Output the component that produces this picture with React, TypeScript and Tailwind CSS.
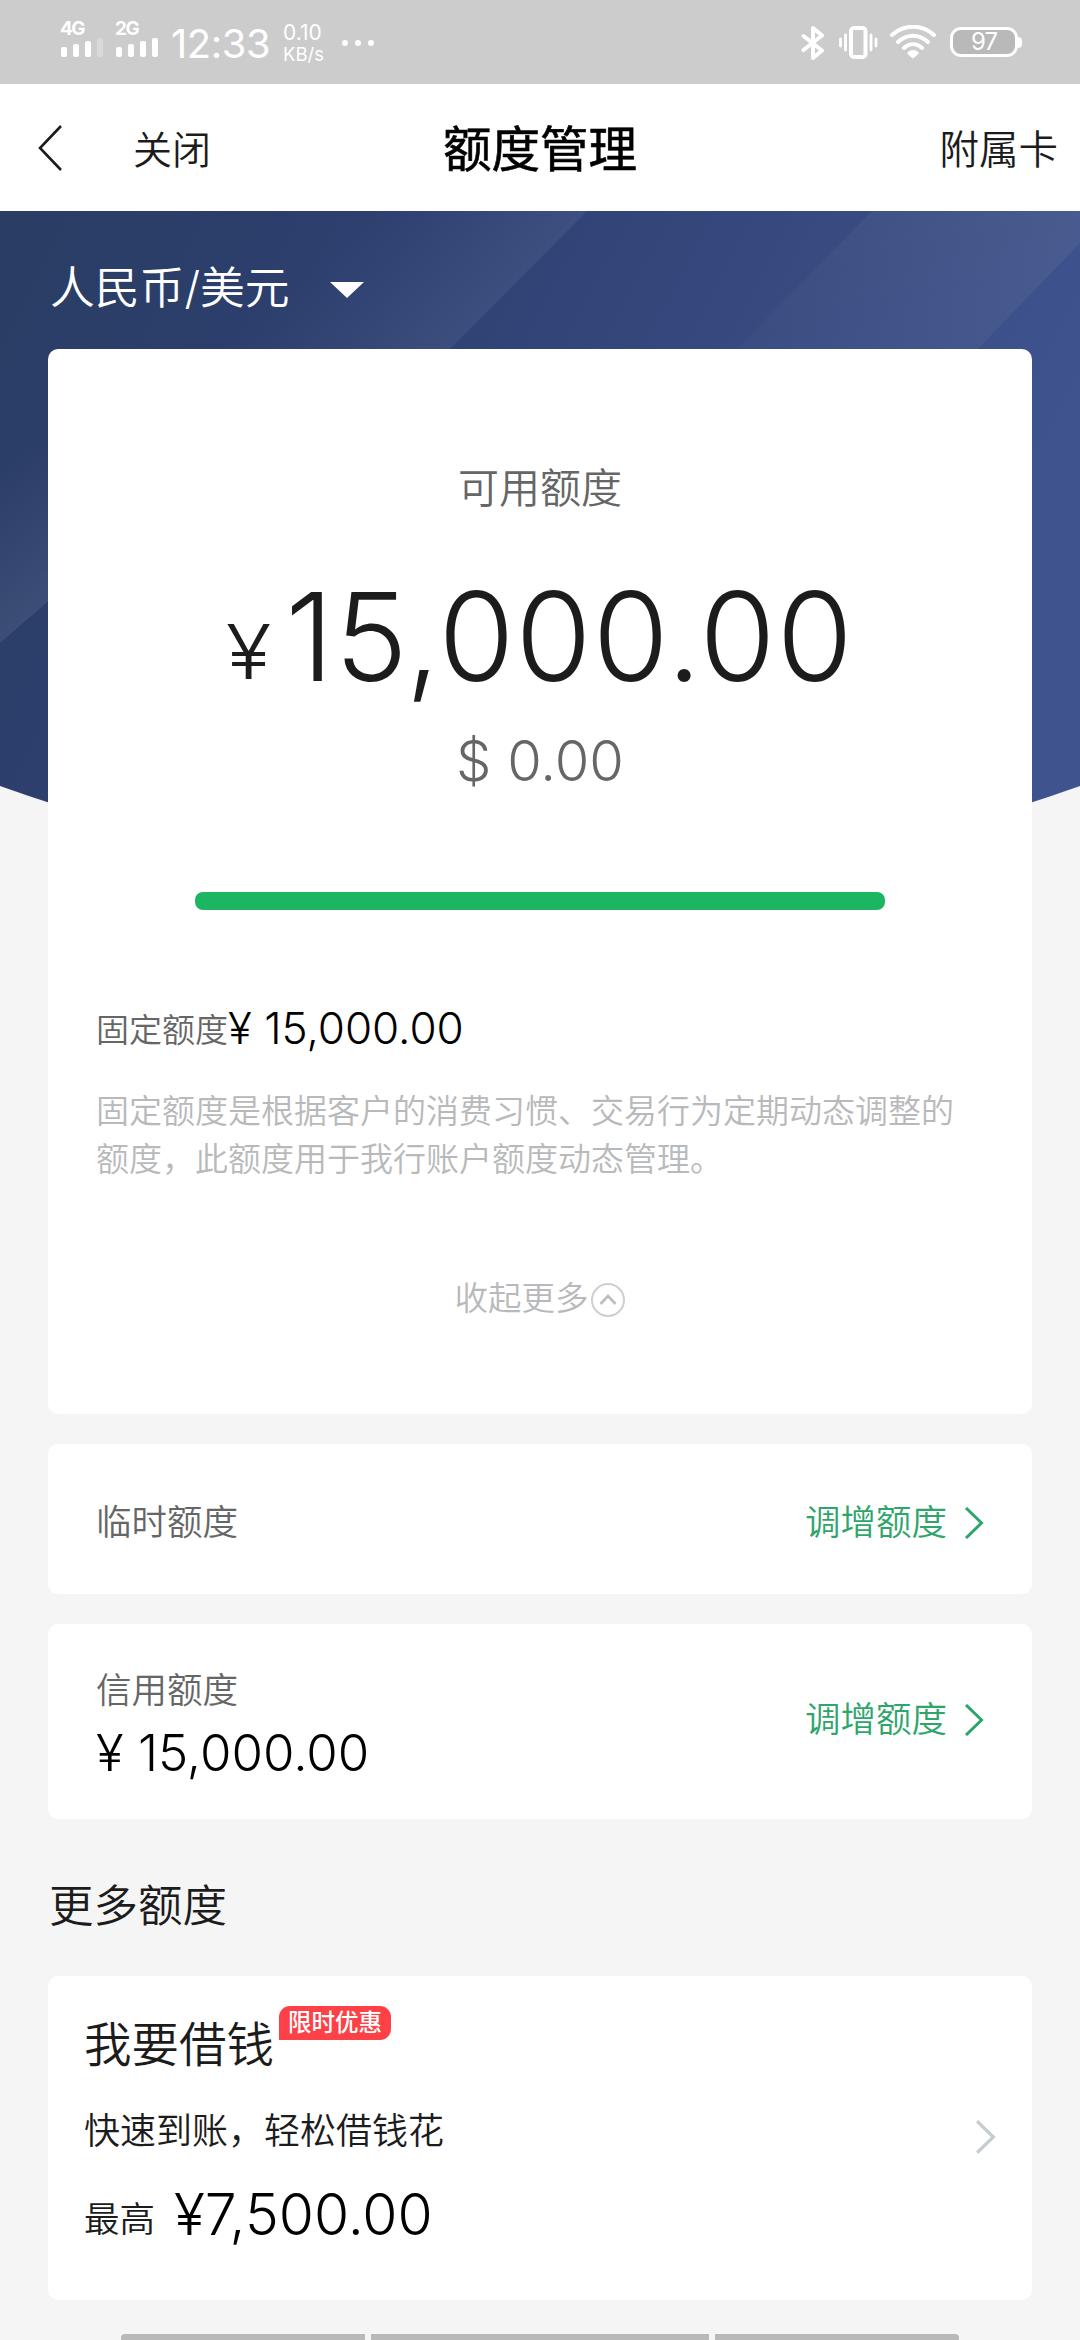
import { ReactNode } from "react";

function Chevron({ className, strokeWidth = 3 }: { className?: string; strokeWidth?: number }) {
  return (
    <svg viewBox="0 0 20 32" fill="none" stroke="currentColor" strokeWidth={strokeWidth} className={className}>
      <path d="M2 1 L17.5 16 L2 31" />
    </svg>
  );
}

function SignalBars({ label, level }: { label: string; level: number }) {
  const bars = [
    { x: 1, h: 10 },
    { x: 13, h: 13 },
    { x: 25, h: 16 },
    { x: 37, h: 19 },
  ];

  return (
    <div className="flex w-[43px] flex-col">
      <span className="text-[19px] leading-[16px] font-bold tracking-[-1.5px]">{label}</span>
      <svg viewBox="0 0 43 20" className="h-[20px] w-[43px]">
        {bars.map((bar, i) => (
          <rect
            key={bar.x}
            x={bar.x}
            y={20 - bar.h}
            width="6"
            height={bar.h}
            rx="2"
            fill="#fff"
            opacity={i < level ? 1 : 0.25}
          />
        ))}
      </svg>
    </div>
  );
}

function StatusBar() {
  return (
    <div className="flex h-[84px] justify-between bg-[#cccccc] pr-[58px] pl-[60px] font-normal text-white">
      <div className="flex">
        <div className="flex gap-[12px] pt-[21px]">
          <SignalBars label="4G" level={3} />
          <SignalBars label="2G" level={4} />
        </div>
        <span className="ml-[13px] w-[101px] pt-[20px] text-[40px] leading-[48px] tracking-[-0.5px]">12:33</span>
        <div className="ml-[11px] flex w-[45px] flex-col pt-[21px]">
          <span className="text-[21px] leading-[23px]">0.10</span>
          <span className="text-[18.500px] leading-[20px]">KB/s</span>
        </div>
        <div className="ml-[14px] flex gap-[7px] pt-[40px]">
          <i className="size-[6px] rounded-full bg-white" />
          <i className="size-[6px] rounded-full bg-white" />
          <i className="size-[6px] rounded-full bg-white" />
        </div>
      </div>
      <div className="flex">
        <svg viewBox="0 0 24 36" className="mt-[25px] h-[36px] w-[24px]" fill="none" stroke="#fff" strokeWidth="4" strokeLinejoin="round" strokeLinecap="round">
          <path d="M2.500 11 L21 25.500 L12 33 V3 L21 10.500 L2.500 25" />
        </svg>
        <svg viewBox="0 0 40 36" className="mt-[25px] ml-[14px] h-[36px] w-[40px]" fill="none" stroke="#fff" strokeLinecap="round">
          <rect x="12" y="3" width="14.5" height="29" rx="3" strokeWidth="4" />
          <path d="M6.500 10 V25 M32 10 V25 M1.500 14 V21 M37 14 V21" strokeWidth="2.8" />
        </svg>
        <svg viewBox="0 0 46 36" className="mt-[25px] ml-[11px] h-[36px] w-[46px]" fill="none" stroke="#fff" strokeWidth="4" strokeLinecap="round">
          <path d="M2 10 C14 -1 32 -1 44 10 M8 17 C17 8.500 29 8.500 38 17 M14 23 C19.500 18 26.500 18 32 23" />
          <path d="M18.500 28 C21 25.500 25 25.500 27.500 28 L23 32 Z" fill="#fff" strokeWidth="2.400" strokeLinejoin="round" />
        </svg>
        <div className="mt-[27px] ml-[14px] flex h-[30px] w-[68px] items-center justify-center rounded-[11px] border-3 border-white bg-[#b9b9b9] text-[24px] leading-[24px] tracking-[-1px]">
          97
        </div>
        <i className="mt-[37px] h-[11px] w-[4px] rounded-r-full bg-white" />
      </div>
    </div>
  );
}

function NavBar() {
  return (
    <header className="grid h-[127px] grid-cols-3 items-center bg-white text-[#1c1c1c]">
      <div className="flex items-center pl-[38px]">
        <svg viewBox="0 0 25 46" className="h-[46px] w-[25px]" fill="none" stroke="currentColor" strokeWidth="2.600">
          <path d="M23 1 L2 23 L23 45" />
        </svg>
        <span className="ml-[70px] pt-[5px] text-[39px]">关闭</span>
      </div>
      <h1 className="pt-[6px] text-center text-[48.500px] font-normal text-black [-webkit-text-stroke:0.6px_black]">额度管理</h1>
      <span className="pt-[6px] pr-[22px] text-right text-[39.500px]">附属卡</span>
    </header>
  );
}

// Curved blue backdrop behind the currency selector and the first card
function HeroBackdrop() {
  return (
    <svg viewBox="0 0 1080 640" className="absolute inset-x-0 top-0 h-[640px] w-full">
      <defs>
        <linearGradient id="hero" x1="0" y1="0" x2="1" y2="0.3">
          <stop offset="0" stopColor="#2a3d63" />
          <stop offset="0.35" stopColor="#2d4070" />
          <stop offset="1" stopColor="#3f538f" />
        </linearGradient>
        <linearGradient id="beamTop" gradientUnits="userSpaceOnUse" x1="520" y1="70" x2="410" y2="-40">
          <stop offset="0" stopColor="#fff" stopOpacity="0.06" />
          <stop offset="1" stopColor="#fff" stopOpacity="0" />
        </linearGradient>
        <linearGradient id="beamRight" gradientUnits="userSpaceOnUse" x1="1060" y1="0" x2="740" y2="150">
          <stop offset="0" stopColor="#dde8d0" stopOpacity="0.07" />
          <stop offset="1" stopColor="#dde8d0" stopOpacity="0.02" />
        </linearGradient>
        <linearGradient id="beamLeft" gradientUnits="userSpaceOnUse" x1="24" y1="411" x2="-60" y2="300">
          <stop offset="0" stopColor="#fff" stopOpacity="0.08" />
          <stop offset="1" stopColor="#fff" stopOpacity="0" />
        </linearGradient>
        <clipPath id="curve">
          <path d="M0 0 H1080 V575 Q540 768 0 575 Z" />
        </clipPath>
      </defs>
      <g clipPath="url(#curve)">
        <rect width="1080" height="640" fill="url(#hero)" />
        <path d="M200 0 H587 L440 148 H200 Z" fill="url(#beamTop)" />
        <path d="M872 0 H1080 V32 L968 148 H727 Z" fill="url(#beamRight)" />
        <path d="M0 150 H60 V380 L0 432 Z" fill="url(#beamLeft)" />
      </g>
    </svg>
  );
}

function Card({ className = "", children }: { className?: string; children: ReactNode }) {
  return <section className={`mx-[48px] rounded-[10px] bg-white ${className}`}>{children}</section>;
}

function IncreaseLink({ className = "" }: { className?: string }) {
  return (
    <a className={`flex items-center text-[35.500px] text-[#2fa56c] ${className}`}>
      调增额度
      <Chevron className="ml-[17px] h-[32px] w-[20px]" />
    </a>
  );
}

function AvailableLimit() {
  return (
    <Card className="flex h-[1065px] flex-col">
      <div className="flex flex-col items-center">
        <p className="mt-[109px] text-[41px] leading-[60px] text-[#666]">可用额度</p>
        <p className="mt-[44px] flex h-[150px] items-baseline pl-[4px] text-[#1c1c1c]">
          <span className="origin-right -translate-y-[2px] scale-x-110 text-[76px] leading-[150px]">¥</span>
          <span className="ml-[14px] text-[123px] leading-[150px] tracking-[1.200px]">15,000.00</span>
        </p>
        <p className="mt-[14px] text-[56px] leading-[70px] text-[#666]">$ 0.00</p>
        <div className="mt-[96px] h-[18px] w-[690px] rounded-[8px] bg-[#1cb562]" />
      </div>
      <div className="mt-[88px] px-[48px]">
        <p className="flex h-[60px] items-baseline leading-[60px]">
          <span className="-translate-y-[2px] text-[33px] text-[#666]">固定额度</span>
          <span className="text-[44px] text-black">¥ 15,000.00</span>
        </p>
        <p className="mt-[29px] w-[880px] text-[33px] leading-[48px] text-[#b8b9bb]">
          固定额度是根据客户的消费习惯、交易行为定期动态调整的额度，此额度用于我行账户额度动态管理。
        </p>
      </div>
      <button className="mt-[90px] flex items-center justify-center text-[33.500px] text-[#b8b9bb]">
        收起更多
        <svg viewBox="0 0 36 36" className="mt-[4px] ml-[1px] size-[36px]" fill="none">
          <circle cx="18" cy="18" r="16" stroke="#cfcfcf" strokeWidth="2" />
          <path d="M10.500 22 L18 14 L25.500 22" stroke="#bdbdbd" strokeWidth="2.600" />
        </svg>
      </button>
    </Card>
  );
}

function LoanCard() {
  return (
    <Card className="mt-[37px] flex h-[324px] items-center justify-between pr-[36px] pl-[36px]">
      <div className="flex flex-col pb-[12px]">
        <div className="flex text-[#1c1c1c]">
          <span className="text-[47.500px] leading-[70px]">我要借钱</span>
          <span className="-mt-[4px] ml-[5px] flex h-[34px] w-[112px] items-center justify-center rounded-[11px] rounded-bl-none bg-[#fd4146] text-[23.500px] font-medium text-white">
            限时优惠
          </span>
        </div>
        <p className="mt-[21px] text-[36px] leading-[60px] text-[#1c1c1c]">快速到账，轻松借钱花</p>
        <p className="mt-[14px] flex h-[80px] items-baseline leading-[80px] text-[#1c1c1c]">
          <span className="-translate-y-[3px] text-[35.500px]">最高</span>
          <span className="ml-[19px] text-[57px] text-black">¥7,500.00</span>
        </p>
      </div>
      <Chevron className="mb-[3px] h-[34px] w-[21px] text-[#c5ccd2]" />
    </Card>
  );
}

export default function App() {
  return (
    <div className="h-[2340px] w-[1080px] overflow-hidden bg-[#f5f5f5] font-['Inter','Noto_Sans_CJK_SC',sans-serif] font-[350]">
      <StatusBar />
      <NavBar />
      <main className="relative">
        <HeroBackdrop />
        <div className="relative">
          <button className="flex h-[138px] items-center pt-[18px] pl-[50px] text-[44.800px] text-white">
            人民币/美元
            <svg viewBox="0 0 34 16" className="mt-[2px] ml-[40px] h-[16px] w-[34px]">
              <path d="M0 0 H34 L17 16 Z" fill="#fff" />
            </svg>
          </button>
          <AvailableLimit />
          <Card className="mt-[30px] flex h-[150px] items-center justify-between px-[48px] pt-[7px]">
            <span className="text-[35.500px] text-[#666]">临时额度</span>
            <IncreaseLink />
          </Card>
          <Card className="mt-[30px] flex h-[195px] items-center justify-between px-[48px]">
            <div className="flex flex-col pt-[8px]">
              <span className="text-[35.500px] leading-[54px] text-[#666]">信用额度</span>
              <span className="text-[51px] leading-[70px] text-black">¥ 15,000.00</span>
            </div>
            <IncreaseLink className="pb-[3px]" />
          </Card>
          <h2 className="mt-[54px] ml-[49px] text-[44.500px] leading-[66px] text-[#1c1c1c]">更多额度</h2>
          <LoanCard />
          <div className="mx-[121px] mt-[34px] flex gap-[6px]">
            <i className="h-[7px] w-[244px] rounded-tl-[4px] bg-[#b9b9b9]" />
            <i className="h-[7px] w-[338px] bg-[#b9b9b9]" />
            <i className="h-[7px] w-[244px] rounded-tr-[4px] bg-[#b9b9b9]" />
          </div>
        </div>
      </main>
    </div>
  );
}
